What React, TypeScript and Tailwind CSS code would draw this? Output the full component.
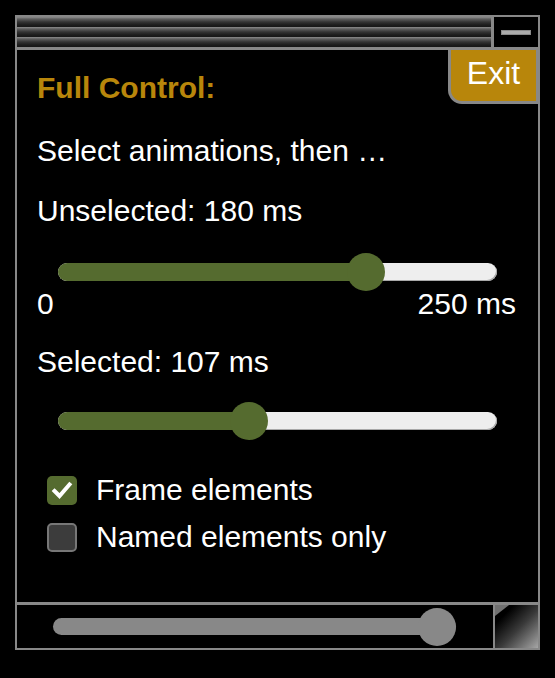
import { useState } from 'react'

/**
 * Track with a green fill up to the thumb, styled after a native range input
 */
function RangeSlider({ value, max }: { value: number; max: number }) {
    const width = 439
    const thumb = 38
    const center = thumb / 2 + (value / max) * (width - thumb)
    return (
        <div className="relative flex h-[36px] w-[439px] items-center">
            <div className="relative h-[18px] w-full overflow-hidden rounded-full bg-[#eeeeee] shadow-[inset_-1px_-1px_0_#a8a8a8]">
                <div className="h-full bg-[#556b2f]" style={{ width: center }} />
            </div>
            <div
                className="absolute top-1/2 h-[38px] w-[38px] -translate-x-1/2 -translate-y-1/2 rounded-full bg-[#556b2f]"
                style={{ left: center }}
            />
        </div>
    )
}

function CheckRow({ checked, label }: { checked: boolean; label: string }) {
    return (
        <div className="flex items-center gap-[19px]">
            {checked ? (
                <div className="flex h-[29px] w-[30px] items-center justify-center rounded-[5px] bg-[#556b2f]">
                    <svg width="30" height="29" viewBox="0 0 30 29">
                        <path d="M7.5 15 L12.5 20 L22.5 8.5" fill="none" stroke="#fff" strokeWidth="4" strokeLinecap="square" />
                    </svg>
                </div>
            ) : (
                <div className="h-[29px] w-[30px] rounded-[5px] border-2 border-[#777] bg-[#3c3c3c]" />
            )}
            <span>{label}</span>
        </div>
    )
}

export default function App() {
    const [unselected] = useState(180)
    const [selected] = useState(107)

    return (
        <div className="min-h-screen bg-black p-[15px] font-['Liberation_Sans',Arial,sans-serif] text-[30px] leading-[30px] text-white">
            <div className="flex w-[525px] flex-col border-2 border-[#888]">
                {/* title bar */}
                <div className="flex h-[30px]">
                    <div className="flex-1 bg-[repeating-linear-gradient(180deg,#8c8c8c_0px,#5e5e5e_2px,#333_5px,#1c1c1c_8px,#161616_10px)]" />
                    <div className="w-[3px] bg-[#888]" />
                    <div className="flex w-[44px] items-center justify-center">
                        <div className="h-[5px] w-[30px] border border-[#8a8a8a] bg-[#ababab]" />
                    </div>
                </div>
                <div className="h-[3px] bg-[#888]" />

                {/* body */}
                <div className="relative flex h-[552px] flex-col pt-[23px]">
                    <div className="absolute right-0 top-0 h-[54px] w-[90px] rounded-bl-[14px] border-b-[3px] border-l-[3px] border-r-2 border-[#888] bg-[#b8860b] pt-[8px] text-center text-[32px]">
                        Exit
                    </div>

                    <div className="px-5 font-bold text-[#b8860b]">Full Control:</div>
                    <div className="mt-[33px] px-5">Select animations, then …</div>
                    <div className="mt-[30px] px-5">Unselected: {unselected} ms</div>
                    <div className="mt-[28px] px-[41px]">
                        <RangeSlider value={unselected} max={250} />
                    </div>
                    <div className="-mt-[1px] flex justify-between pl-5 pr-[22px]">
                        <span>0</span>
                        <span>250 ms</span>
                    </div>
                    <div className="mt-[28px] px-5">Selected: {selected} ms</div>
                    <div className="mt-[26px] px-[41px]">
                        <RangeSlider value={selected} max={250} />
                    </div>
                    <div className="mt-[36px] pl-[30px]">
                        <CheckRow checked label="Frame elements" />
                    </div>
                    <div className="mt-[17px] pl-[30px]">
                        <CheckRow checked={false} label="Named elements only" />
                    </div>
                </div>
                <div className="h-[3px] bg-[#888]" />

                {/* footer with zoom slider and resize grip */}
                <div className="flex h-[43px]">
                    <div className="flex flex-1 items-center pl-[36px]">
                        <div className="relative flex h-[38px] w-[403px] items-center">
                            <div className="h-[17px] w-full rounded-full bg-[#888]" />
                            <div className="absolute right-0 top-1/2 h-[38px] w-[38px] -translate-y-1/2 rounded-full bg-[#888]" />
                        </div>
                    </div>
                    <div className="w-[2px] bg-[#888]" />
                    <div className="relative w-[43px] bg-[linear-gradient(135deg,#000_22%,#3a3a3a_55%,#a6a6a6_100%)]">
                        <svg className="absolute left-0 top-0" width="14" height="12" viewBox="0 0 14 12">
                            <polygon points="0,0 14,0 0,11" fill="#707070" />
                        </svg>
                    </div>
                </div>
            </div>
        </div>
    )
}
